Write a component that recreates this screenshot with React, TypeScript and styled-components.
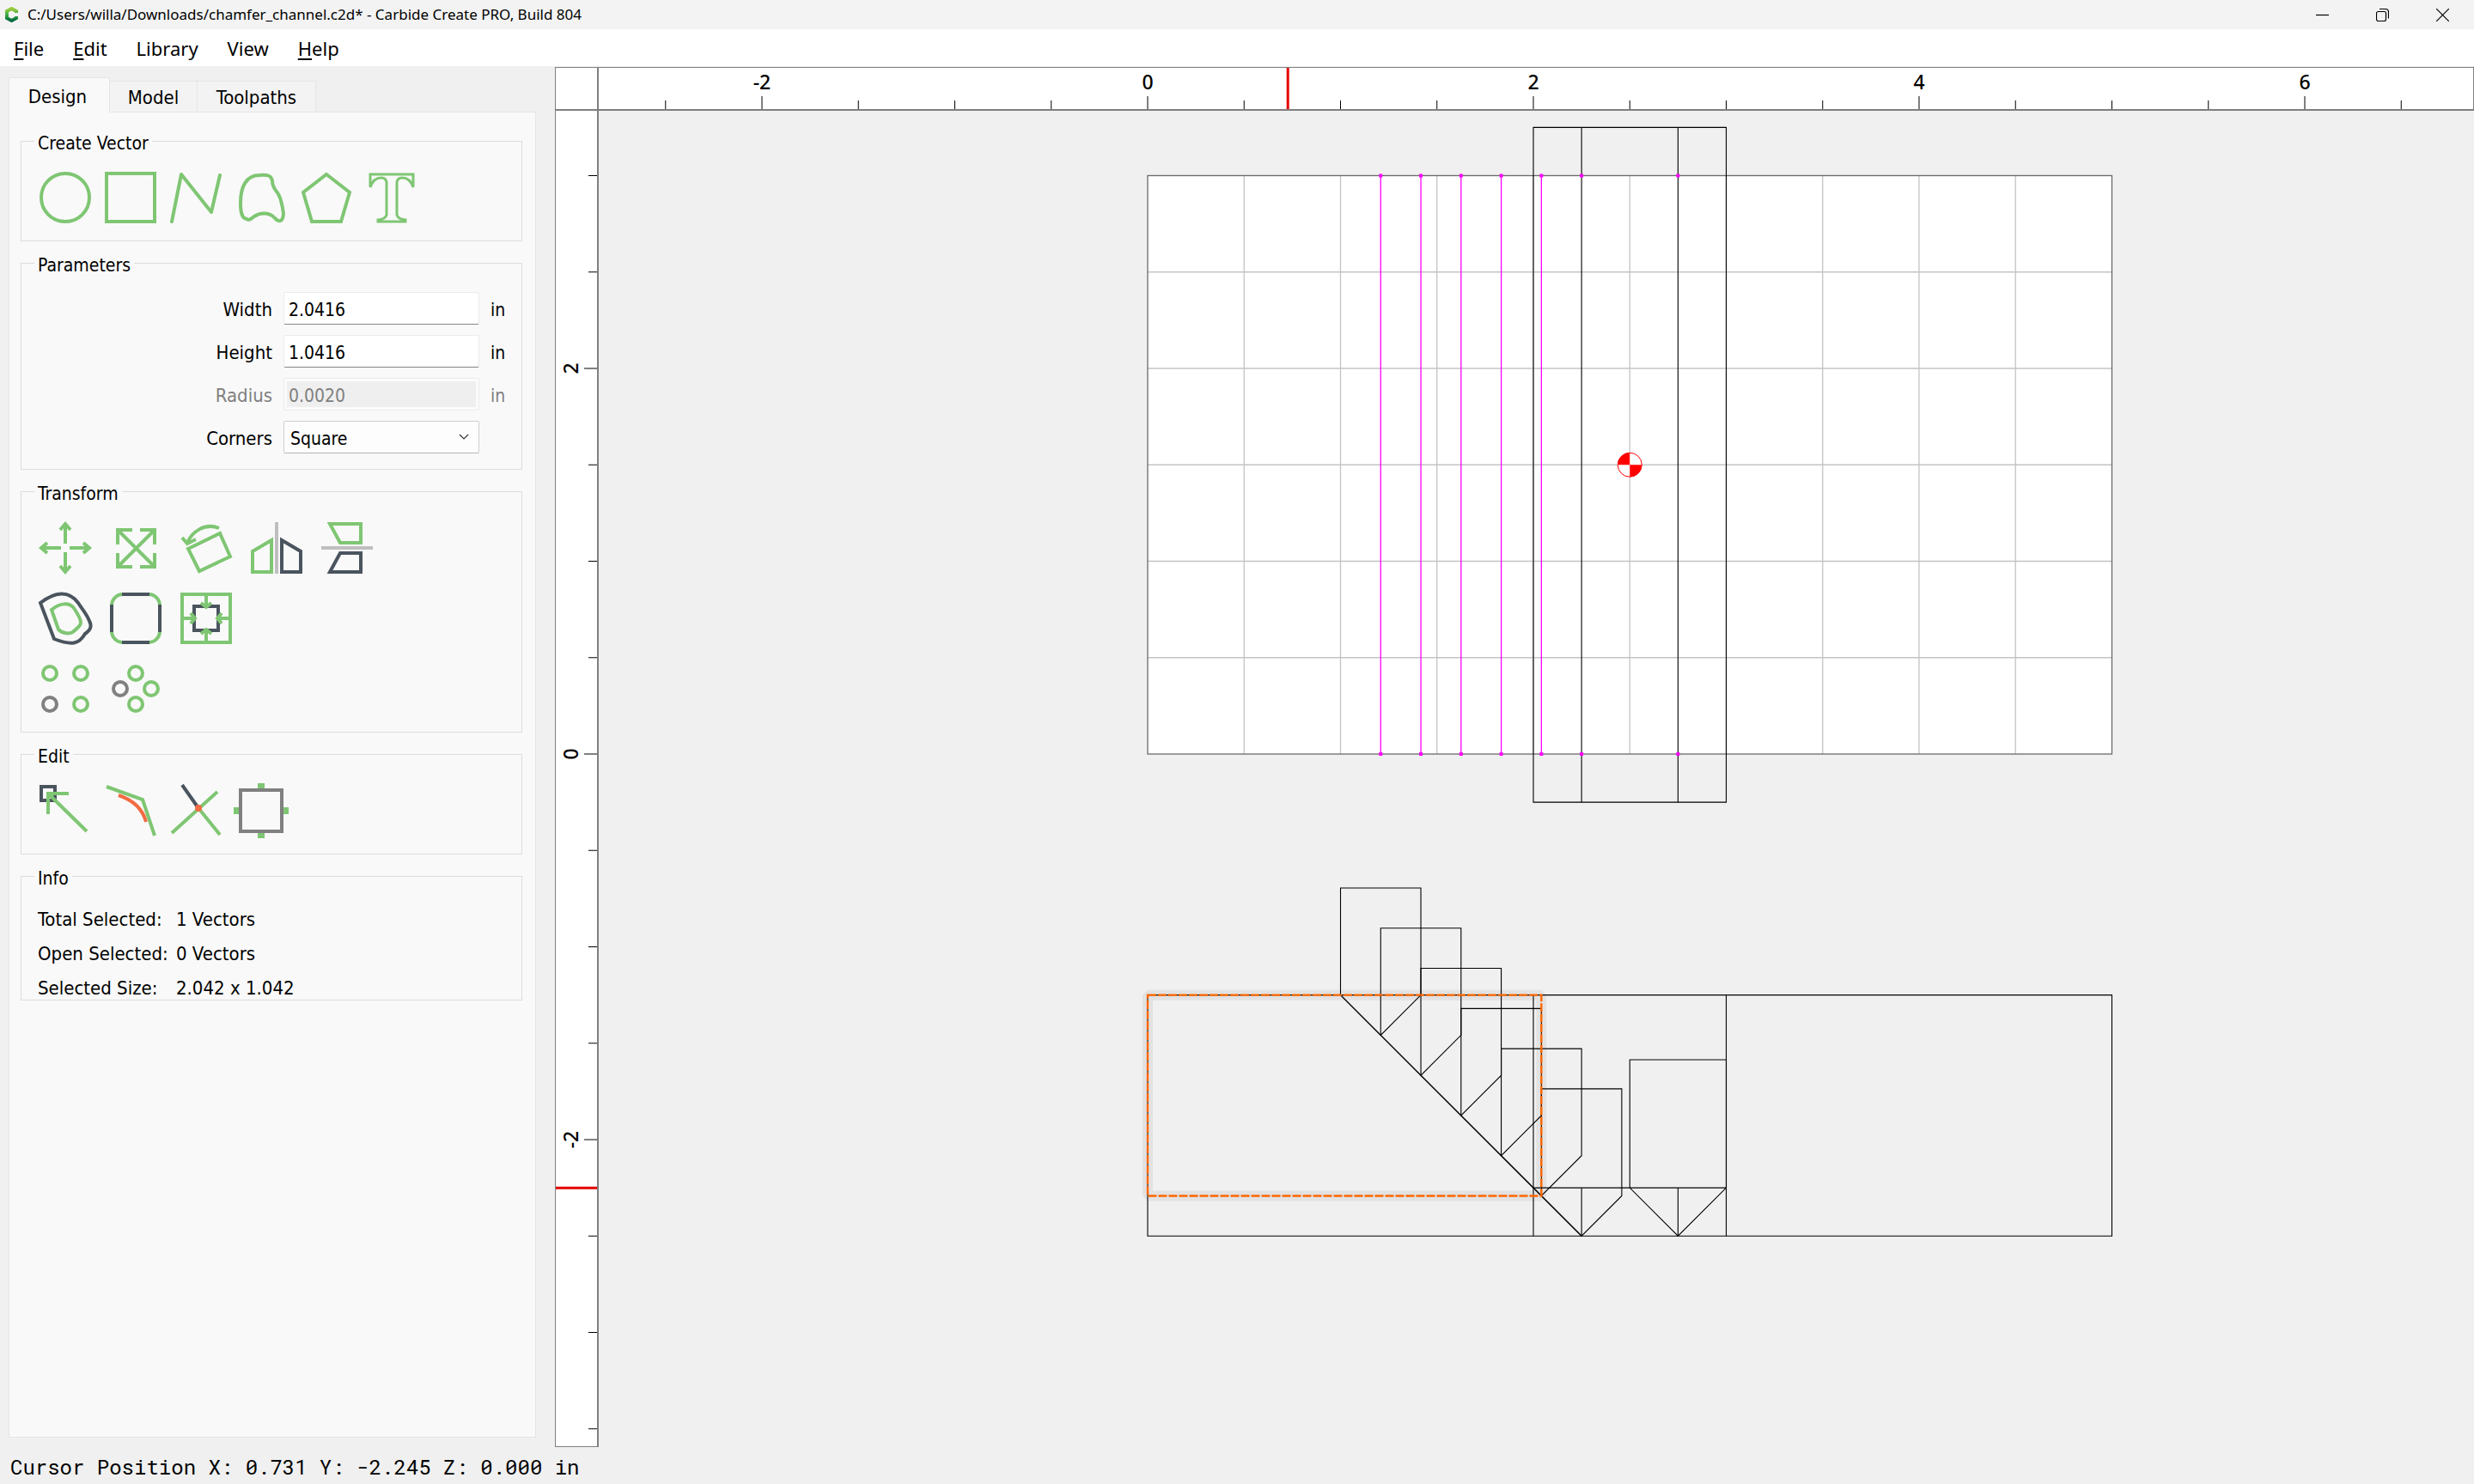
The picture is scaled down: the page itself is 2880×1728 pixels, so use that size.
import React from "react";
import styled, { createGlobalStyle, css } from "styled-components";

const GREEN = "#7fc673";
const SLATE = "#4a545e";
const GRAY = "#808080";
const ORANGE = "#f26b43";

const GlobalStyle = createGlobalStyle`
  *, *::before, *::after { box-sizing: border-box; }
  body {
    margin: 0;
    background: #f0f0f0;
    color: #000;
    font-family: "DejaVu Sans Condensed", "DejaVu Sans", Tahoma, sans-serif;
    font-size: 21px;
  }
  button, input, select { font: inherit; color: inherit; }
`;

/* ---------- window chrome ---------- */

const Window = styled.div`
  display: flex;
  flex-direction: column;
  height: 100vh;
`;

const TitleBar = styled.header`
  display: flex;
  align-items: center;
  flex: 0 0 34px;
  padding: 0 2px 0 5px;
  background: #f3f3f3;
  font-family: "Noto Sans", "Segoe UI", sans-serif;
  font-size: 17px;
`;

const Title = styled.h1`
  flex: 1;
  margin: 0 0 0 10px;
  font-size: inherit;
  font-weight: 400;
  line-height: 34px;
`;

const WindowButton = styled.button`
  display: grid;
  place-items: center;
  width: 70px;
  height: 34px;
  padding: 0;
  border: 0;
  background: none;
`;

const MenuBar = styled.nav`
  display: flex;
  align-items: center;
  gap: 34px;
  flex: 0 0 43px;
  padding: 0 16px;
  background: #fff;
  font-family: "Noto Sans", "Segoe UI", sans-serif;
  font-size: 22px;
`;

const MenuItem = styled.button`
  padding: 0;
  border: 0;
  background: none;
  line-height: 30px;
`;

const Mnemonic = styled.span`
  text-decoration: underline;
  text-decoration-thickness: 2px;
  text-underline-offset: 3px;
`;

const Main = styled.main`
  display: flex;
  flex: 1;
  min-height: 0;
`;

const StatusBar = styled.footer`
  flex: 0 0 43px;
  padding: 3px 0 0 12px;
  font-family: "Roboto Mono", "DejaVu Sans Mono", monospace;
  font-size: 24px;
  line-height: 40px;
`;

/* ---------- side panel ---------- */

const Sidebar = styled.aside`
  display: flex;
  flex-direction: column;
  flex: 0 0 646px;
  padding: 13px 22px 11px 10px;
`;

const TabStrip = styled.div`
  display: grid;
  grid-template-columns: 118px 102px 138px;
  align-items: end;
  font-size: 22px;
`;

const Tab = styled.button<{ $active?: boolean }>`
  height: 36px;
  padding: 3px 0 0;
  border: 1px solid #e5e5e5;
  border-left-width: 0;
  border-bottom: 0;
  background: #f3f3f3;
  line-height: 30px;
  ${(p) =>
    p.$active &&
    css`
      height: 41px;
      padding-right: 4px;
      margin-bottom: -1px;
      border-left-width: 1px;
      background: #f9f9f9;
      z-index: 1;
    `}
`;

const Panel = styled.section`
  display: flex;
  flex-direction: column;
  gap: 12px;
  flex: 1;
  padding: 20px 15px 0 13px;
  border: 1px solid #e5e5e5;
  background: #f9f9f9;
`;

const Group = styled.fieldset`
  margin: 0;
  min-width: 0;
  padding: 0;
  border: 1px solid #dcdcdc;
`;

const GroupTitle = styled.legend`
  margin-left: 15px;
  padding: 6px 4px 0;
  line-height: 20px;
`;

const ToolRow = styled.div<{ $cell: number }>`
  display: grid;
  grid-auto-flow: column;
  grid-auto-columns: ${(p) => p.$cell}px;
  justify-content: start;
`;

const VectorTools = styled(ToolRow)`
  padding: 14px 13px 11px;
`;

const TransformTools = styled.div`
  padding: 12px 10px 9px;
`;

const ToolButton = styled.button<{ $cell: number }>`
  display: grid;
  place-items: center;
  height: ${(p) => p.$cell}px;
  padding: 0;
  border: 0;
  background: none;
  svg { overflow: visible; }
`;

const Fields = styled.div`
  display: grid;
  gap: 12px;
  padding: 21px 0 18px;
`;

const Field = styled.div<{ $off?: boolean }>`
  display: grid;
  grid-template-columns: 292px 228px 1fr;
  column-gap: 13px;
  align-items: center;
  height: 38px;
  color: ${(p) => (p.$off ? "#808080" : "#000")};
`;

const FieldLabel = styled.label`
  padding-top: 3px;
  font-size: 22px;
  text-align: right;
`;

const Unit = styled.span`
  padding-top: 3px;
`;

const NumberBox = styled.input`
  width: 100%;
  height: 38px;
  padding: 3px 5px 0;
  border: 1px solid #ebebeb;
  border-bottom-color: #868686;
  border-radius: 2px;
  background: #fff;
  &:disabled {
    border-color: #ebebeb;
    background: #efefef;
    box-shadow: inset 0 0 0 3px #fbfbfb;
    color: #808080;
  }
`;

const SelectWrap = styled.div`
  position: relative;
  svg {
    position: absolute;
    right: 12px;
    top: 14px;
    pointer-events: none;
  }
`;

const SelectBox = styled.select`
  appearance: none;
  display: block;
  width: 100%;
  height: 38px;
  padding: 3px 7px 0;
  border: 1px solid #cfcfcf;
  border-bottom-color: #b5b5b5;
  border-radius: 2px;
  background: #fdfdfd;
`;

const InfoList = styled.dl`
  display: grid;
  grid-template-columns: 161px 1fr;
  row-gap: 12px;
  margin: 0;
  padding: 24px 0 0 19px;
  height: 131px;
  font-size: 22px;
  line-height: 28px;
  dd { margin: 0; }
`;

/* ---------- workspace ---------- */

const Workspace = styled.section`
  display: grid;
  grid-template: 51px minmax(0, 1fr) / 51px minmax(0, 1fr);
  flex: 1;
  min-width: 0;
  margin-top: 1px;
`;

const RulerCell = styled.div<{ $side: "corner" | "top" | "left" }>`
  overflow: hidden;
  background: #fff;
  border: 0 solid #7f7f7f;
  ${(p) => p.$side === "corner" && css`border-width: 1px 2px 2px 1px;`}
  ${(p) => p.$side === "top" && css`border-width: 1px 1px 2px 0;`}
  ${(p) => p.$side === "left" && css`border-width: 0 2px 1px 1px;`}
`;

const Viewport = styled.div`
  overflow: hidden;
  background: #f0f0f0;
`;

const Drawing = styled.svg`
  display: block;
  width: 100%;
  height: 100%;
`;

const RulerText = styled.text`
  font-family: "Noto Sans", sans-serif;
  font-size: 23px;
  font-weight: 500;
  text-anchor: middle;
`;

/* ---------- icons ---------- */

type Pic = React.ReactNode;

const vectorIcons: [string, Pic][] = [
  ["Circle", <circle cx="30" cy="30" r="28" />],
  ["Rectangle", <rect x="2" y="2" width="56" height="56" />],
  ["Polyline", <path d="M2 58 13 3 48 47 58 4" strokeLinecap="round" strokeLinejoin="round" />],
  ["Curve", <path d="M13 55C7 54 6 46 6 36C6 17 13 4 28 4C37 3 42 4 43 11C43 18 46 20 50 26C54 33 55 42 56 49C55 60 50 58 46 54C40 47 29 47 22 52C18 55 16 57 13 55Z" />],
  ["Polygon", <path d="M30 3 57 24 47 58H13L3 24Z" />],
  ["Text", <path d="M5 18V3H55V18C52 9 47 7 42 7Q37 7 36 12V50Q37 55 46 56V58H14V56Q23 55 24 50V12Q23 7 18 7C13 7 8 9 5 18Z" strokeWidth="3" />],
];

const arrowHead = "M30 2V25M24 9 30 2 36 9";

const transformIcons: [string, Pic][][] = [
  [
    ["Move", <>{[0, 90, 180, 270].map((a) => <path key={a} d={arrowHead} transform={`rotate(${a} 30 30)`} />)}</>],
    ["Scale", <path d="M9 26V9H26M35 9H52V26M52 36V52H35M26 52H9V36M10 10 51 51M51 10 10 51" />],
    ["Rotate", <path d="M9 31 46 13 58 40 22 57ZM45 7C28 0 13 12 8 24M2 18 8 25 18 20" />],
    ["Mirror horizontal", <><path d="M2 34 24 21V58H2Z" /><path d="M36 21 58 34V58H36Z" stroke={SLATE} /><path d="M30 0V60" stroke="#bfbfbf" /></>],
    ["Mirror vertical", <><path d="M10 2H46V24H22Z" /><path d="M22 36H46V58H10Z" stroke={SLATE} /><path d="M0 30H60" stroke="#bfbfbf" /></>],
  ],
  [
    ["Offset", <><path d="M1 12C18 -1 34 -3 45 12C50 20 55 25 58 33C61 39 60 43 53 48C46 60 38 62 17 54Z" stroke={SLATE} /><path d="M14 20C24 12 34 11 40 18C44 24 48 31 48 35C48 39 44 41 41 44C36 50 26 47 22 43Z" /></>],
    ["Corner fillet", <><rect x="2" y="2" width="56" height="56" rx="13" /><path d="M14 2H46M14 58H46M2 14V46M58 14V46" stroke={SLATE} /></>],
    ["Align", <><rect x="2" y="2" width="56" height="56" /><rect x="16" y="16" width="28" height="28" stroke={SLATE} />{[0, 90, 180, 270].map((a) => <path key={a} d="M30 4V17M24 12 30 17 36 12" transform={`rotate(${a} 30 30)`} />)}</>],
  ],
  [
    ["Linear array", <g><circle cx="12" cy="12" r="8" /><circle cx="48" cy="12" r="8" /><circle cx="48" cy="48" r="8" /><circle cx="12" cy="48" r="8" stroke={GRAY} /></g>],
    ["Circular array", <g><circle cx="30" cy="12" r="8" /><circle cx="48" cy="30" r="8" /><circle cx="30" cy="48" r="8" /><circle cx="12" cy="30" r="8" stroke={GRAY} /></g>],
  ],
];

const editIcons: [string, Pic][] = [
  ["Node edit", <><rect x="2" y="2" width="16" height="16" stroke={SLATE} /><path d="M10 34V10H34M10 10 55 54" /></>],
  ["Smooth", <><path d="M2 2 44 17 58 59" /><path d="M16 12C34 18 44 28 48 43" stroke={ORANGE} /></>],
  ["Trim", <><path d="M2 56 55 8M33 27 58 58" /><path d="M14 0 33 27" stroke={SLATE} /><circle cx="33" cy="27" r="4" fill={ORANGE} stroke="none" /></>],
  ["Bounds", <><path d="M26 1H34M26 59H34M1 26V34M59 26V34" strokeWidth="6" /><rect x="6" y="6" width="48" height="48" stroke={GRAY} /></>],
];

const Tools = ({ items, cell }: { items: [string, Pic][]; cell: number }) => (
  <>
    {items.map(([name, pic]) => (
      <ToolButton key={name} type="button" aria-label={name} $cell={cell}>
        <svg width="60" height="60" viewBox="0 0 60 60" fill="none" stroke={GREEN} strokeWidth="4">
          {pic}
        </svg>
      </ToolButton>
    ))}
  </>
);

/* ---------- drawing data (inches) ---------- */

const SCALE = 224.5;
const X0 = 639;
const Y0 = 749;
const px = (x: number) => X0 + x * SCALE;
const py = (y: number) => Y0 - y * SCALE;
const STEP = 0.20833;

const range = (from: number, to: number) =>
  Array.from({ length: to - from + 1 }, (_, i) => from + i);

const poly = (pts: [number, number][]) =>
  pts.map(([x, y]) => `${px(x)},${py(y)}`).join(" ");

const channelLines = range(1, 5).map((k) => 1 + k * STEP);
const vertexColumns = [...channelLines, 2.25, 2.75];

const TopRuler = () => (
  <Drawing aria-hidden>
    {range(-5, 13).map((i) => {
      const major = i % 4 === 0;
      return (
        <g key={i}>
          <line x1={px(i / 2)} x2={px(i / 2)} y1={major ? 33 : 38} y2={48} stroke="#000" />
          {major && <RulerText x={px(i / 2)} y={25}>{i / 2}</RulerText>}
        </g>
      );
    })}
    <line x1={px(0.727)} x2={px(0.727)} y1={0} y2={48} stroke="#e60000" strokeWidth={3} />
  </Drawing>
);

const LeftRuler = () => (
  <Drawing aria-hidden>
    {range(-7, 6).map((i) => {
      const major = i % 4 === 0;
      const y = py(i / 2);
      return (
        <g key={i}>
          <line x1={major ? 33 : 38} x2={48} y1={y} y2={y} stroke="#000" />
          {major && <RulerText transform={`translate(26 ${y}) rotate(-90)`}>{i / 2}</RulerText>}
        </g>
      );
    })}
    <line x1={0} x2={48} y1={py(-2.25)} y2={py(-2.25)} stroke="#e60000" strokeWidth={3} />
  </Drawing>
);

const Design = () => (
  <Drawing role="img" aria-label="Design view">
    <rect x={px(0)} y={py(3)} width={5 * SCALE} height={3 * SCALE} fill="#fff" />
    <g stroke="#c4c4c4" strokeWidth={1.3}>
      {range(1, 9).map((i) => (
        <line key={i} x1={px(i / 2)} x2={px(i / 2)} y1={py(3)} y2={py(0)} />
      ))}
      {range(1, 5).map((i) => (
        <line key={i} x1={px(0)} x2={px(5)} y1={py(i / 2)} y2={py(i / 2)} />
      ))}
    </g>
    <rect x={px(0)} y={py(3)} width={5 * SCALE} height={3 * SCALE} fill="none" stroke="#6a6a6a" strokeWidth={1.3} />

    <g fill="none" stroke="#000" strokeWidth={1.1}>
      <polygon points={poly([[2, 3.25], [3, 3.25], [3, -0.25], [2, -0.25]])} />
      <polyline points={poly([[2.25, 3.25], [2.25, -0.25]])} />
      <polyline points={poly([[2.75, 3.25], [2.75, -0.25]])} />
      <polygon points={poly([[0, -1.25], [5, -1.25], [5, -2.5], [0, -2.5]])} />
      <polyline points={poly([[2, -1.25], [2, -2.5]])} />
      <polyline points={poly([[3, -1.25], [3, -2.5]])} />
      <polyline points={poly([[2, -2.25], [3, -2.25]])} />
      <polyline points={poly([[2.25, -2.25], [2.25, -2.5]])} />
      <polyline points={poly([[2.75, -2.25], [2.75, -2.5]])} />
      <polyline points={poly([[1, -1.25], [2.25, -2.5]])} />
      <polygon points={poly([[2.5, -1.586], [3, -1.586], [3, -2.25], [2.75, -2.5], [2.5, -2.25]])} />
      {range(0, 5).map((k) => {
        const l = 1 + k * STEP;
        const r = l + 2 * STEP;
        const top = -0.695 - k * STEP;
        const edge = -1.25 - k * STEP;
        return (
          <polygon
            key={k}
            points={poly([[l, top], [r, top], [r, edge], [l + STEP, edge - STEP], [l, edge]])}
          />
        );
      })}
    </g>

    <g stroke="#ff00ff" strokeWidth={1.3}>
      {channelLines.map((x) => (
        <line key={x} x1={px(x)} x2={px(x)} y1={py(3)} y2={py(0)} />
      ))}
    </g>
    <g fill="#ff00ff">
      {vertexColumns.map((x) =>
        [3, 0].map((y) => <rect key={`${x}-${y}`} x={px(x) - 2} y={py(y) - 2} width={4} height={4} />)
      )}
    </g>

    <g fill="none">
      <rect x={px(0)} y={py(-1.25)} width={2.0416 * SCALE} height={1.0416 * SCALE} stroke="#000" strokeOpacity={0.055} strokeWidth={12} strokeLinejoin="bevel" />
      <rect x={px(0)} y={py(-1.25)} width={2.0416 * SCALE} height={1.0416 * SCALE} stroke="#ff6600" strokeWidth={2.4} strokeDasharray="10 2" />
    </g>

    <g transform={`translate(${px(2.5)} ${py(1.5)})`}>
      <circle r={14} fill="#fff" stroke="#f00" />
      <path d="M0 0V-14A14 14 0 0 0 -14 0ZM0 0V14A14 14 0 0 0 14 0Z" fill="#f00" />
    </g>
  </Drawing>
);

/* ---------- application ---------- */

const menus: [string, boolean][] = [
  ["File", true],
  ["Edit", true],
  ["Library", false],
  ["View", false],
  ["Help", true],
];

const windowIcons: [string, Pic][] = [
  ["Minimize", <path d="M0 7.5H15" />],
  ["Restore", <><rect x="0.5" y="3.5" width="11" height="11" rx="2" /><path d="M4 0.5H11Q14.500 0.500 14.500 4V11.500" /></>],
  ["Close", <path d="M0 0 15 15M15 0 0 15" />],
];

export default function App() {
  return (
    <Window>
      <GlobalStyle />
      <TitleBar>
        <svg width="17" height="18" viewBox="0 0 17 18" fill="none" aria-hidden>
          <defs>
            <linearGradient id="logo" x1="0" y1="0" x2="0" y2="1">
              <stop offset="0" stopColor="#9ccb3b" />
              <stop offset="0.5" stopColor="#3fae49" />
              <stop offset="1" stopColor="#00693e" />
            </linearGradient>
          </defs>
          <path d="M14 7V5L8.500 2 3 5V13L8.500 16 14 13V11" stroke="url(#logo)" strokeWidth="4" />
        </svg>
        <Title>C:/Users/willa/Downloads/chamfer_channel.c2d* - Carbide Create PRO, Build 804</Title>
        {windowIcons.map(([name, pic]) => (
          <WindowButton key={name} type="button" aria-label={name}>
            <svg width="15" height="15" viewBox="0 0 15 15" fill="none" stroke="#000" strokeWidth="1.2">{pic}</svg>
          </WindowButton>
        ))}
      </TitleBar>

      <MenuBar>
        {menus.map(([name, marked]) => (
          <MenuItem key={name} type="button">
            {marked ? <><Mnemonic>{name[0]}</Mnemonic>{name.slice(1)}</> : name}
          </MenuItem>
        ))}
      </MenuBar>

      <Main>
        <Sidebar>
          <TabStrip role="tablist">
            <Tab type="button" role="tab" aria-selected $active>Design</Tab>
            <Tab type="button" role="tab">Model</Tab>
            <Tab type="button" role="tab">Toolpaths</Tab>
          </TabStrip>

          <Panel>
            <Group>
              <GroupTitle>Create Vector</GroupTitle>
              <VectorTools $cell={76}>
                <Tools items={vectorIcons} cell={78} />
              </VectorTools>
            </Group>

            <Group>
              <GroupTitle>Parameters</GroupTitle>
              <Fields>
                <Field>
                  <FieldLabel htmlFor="width">Width</FieldLabel>
                  <NumberBox id="width" defaultValue="2.0416" />
                  <Unit>in</Unit>
                </Field>
                <Field>
                  <FieldLabel htmlFor="height">Height</FieldLabel>
                  <NumberBox id="height" defaultValue="1.0416" />
                  <Unit>in</Unit>
                </Field>
                <Field $off>
                  <FieldLabel htmlFor="radius">Radius</FieldLabel>
                  <NumberBox id="radius" defaultValue="0.0020" disabled />
                  <Unit>in</Unit>
                </Field>
                <Field>
                  <FieldLabel htmlFor="corners">Corners</FieldLabel>
                  <SelectWrap>
                    <SelectBox id="corners" defaultValue="Square">
                      <option>Square</option>
                    </SelectBox>
                    <svg width="12" height="10" viewBox="0 0 12 10" fill="none" stroke="#333" strokeWidth="1.2" aria-hidden>
                      <path d="M1 2 6 7 11 2" />
                    </svg>
                  </SelectWrap>
                </Field>
              </Fields>
            </Group>

            <Group>
              <GroupTitle>Transform</GroupTitle>
              <TransformTools>
                {transformIcons.map((row, i) => (
                  <ToolRow key={i} $cell={82}>
                    <Tools items={row} cell={82} />
                  </ToolRow>
                ))}
              </TransformTools>
            </Group>

            <Group>
              <GroupTitle>Edit</GroupTitle>
              <VectorTools $cell={76}>
                <Tools items={editIcons} cell={78} />
              </VectorTools>
            </Group>

            <Group>
              <GroupTitle>Info</GroupTitle>
              <InfoList>
                <dt>Total Selected:</dt>
                <dd>1 Vectors</dd>
                <dt>Open Selected:</dt>
                <dd>0 Vectors</dd>
                <dt>Selected Size:</dt>
                <dd>2.042 x 1.042</dd>
              </InfoList>
            </Group>
          </Panel>
        </Sidebar>

        <Workspace>
          <RulerCell $side="corner" />
          <RulerCell $side="top"><TopRuler /></RulerCell>
          <RulerCell $side="left"><LeftRuler /></RulerCell>
          <Viewport><Design /></Viewport>
        </Workspace>
      </Main>

      <StatusBar>Cursor Position X: 0.731 Y: -2.245 Z: 0.000 in</StatusBar>
    </Window>
  );
}
